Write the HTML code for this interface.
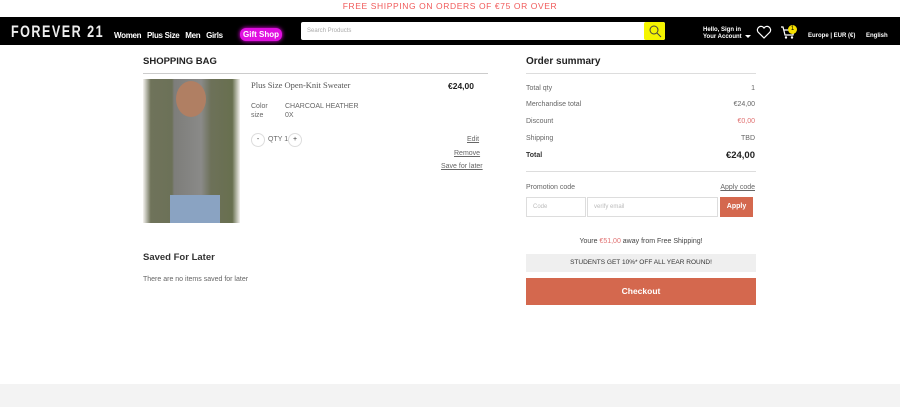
<!DOCTYPE html>
<html><head><meta charset="utf-8"><style>
*{margin:0;padding:0;box-sizing:border-box}
body{width:900px;height:407px;position:relative;background:#fff;font-family:"Liberation Sans",sans-serif;overflow:hidden;color:#333}
.a{position:absolute;white-space:nowrap}
.s{font-size:7px;color:#666}
</style></head><body>
<div class="a" style="left:0;width:900px;top:1px;text-align:center;color:#f05a5a;font-size:8.5px;letter-spacing:0.6px">FREE SHIPPING ON ORDERS OF €75 OR OVER</div>
<div class="a" style="left:0;top:17px;width:900px;height:28px;background:#000"></div>
<div class="a" style="left:11px;top:22px;color:#eee;font-size:17px;font-weight:bold;letter-spacing:2px;transform:scaleX(0.74);transform-origin:left top">FOREVER 21</div>
<div class="a" style="left:114px;top:31px;color:#fff;font-size:8px;font-weight:bold;letter-spacing:-0.3px">Women&nbsp;&nbsp;&nbsp;Plus Size&nbsp;&nbsp;&nbsp;Men&nbsp;&nbsp;&nbsp;Girls</div>
<div class="a" style="left:240px;top:28px;height:13px;padding:2px 3px;background:#e010e0;border-radius:6px;box-shadow:0 0 4px #f0f;color:#fff;font-size:8px;font-weight:bold">Gift Shop</div>
<div class="a" style="left:301px;top:22px;width:364px;height:18px;background:#fff;border-radius:2px"></div>
<div class="a" style="left:307px;top:28px;font-size:6px;color:#aaa">Search Products</div>
<div class="a" style="left:644px;top:22px;width:21px;height:18px;background:#f5f500;border-radius:2px"></div>
<svg class="a" style="left:648px;top:24px" width="14" height="14"><circle cx="6" cy="6" r="4" fill="none" stroke="#444" stroke-width="1"/><path d="M9 9L13 13" stroke="#444"/></svg>
<div class="a" style="left:703px;top:27px;color:#fff;font-size:6px;font-weight:bold;line-height:7px">Hello, Sign in<br>Your Account</div>
<div class="a" style="left:745px;top:35px;border:3px solid transparent;border-top-color:#fff"></div>
<svg class="a" style="left:756px;top:25px" width="16" height="14"><path d="M8 13L2 7A3.2 3.2 0 0 1 8 3A3.2 3.2 0 0 1 14 7Z" fill="none" stroke="#fff" stroke-width="1.2"/></svg>
<svg class="a" style="left:780px;top:25px" width="16" height="15"><path d="M1 2H3L5 10H13L14 5H4" fill="none" stroke="#fff" stroke-width="1.2"/><circle cx="6" cy="12.5" r="1.2" fill="#fff"/><circle cx="12" cy="12.5" r="1.2" fill="#fff"/></svg>
<div class="a" style="left:788px;top:25px;width:9px;height:9px;border-radius:50%;background:#f5e000;font-size:6px;text-align:center;line-height:9px;color:#000">1</div>
<div class="a" style="left:808px;top:33px;color:#fff;font-size:6px;font-weight:bold">Europe | EUR (€)</div>
<div class="a" style="left:866px;top:33px;color:#fff;font-size:6px;font-weight:bold">English</div>

<div class="a" style="left:143px;top:56px;font-size:9.5px;font-weight:bold;color:#222">SHOPPING BAG</div>
<div class="a" style="left:143px;top:73px;width:345px;height:1px;background:#ccc"></div>
<div class="a" style="left:143px;top:79px;width:97px;height:144px;background:linear-gradient(90deg,#f5f3f0 0,#6f735a 8%,#6c7158 30%,#7d7d7a 32%,#8a8a88 60%,#6d7159 70%,#68704f 92%,#f3f1ee 100%)"></div>
<div class="a" style="left:176px;top:81px;width:30px;height:36px;border-radius:50%;background:#b07f63"></div>
<div class="a" style="left:170px;top:195px;width:50px;height:28px;background:#8aa3c2"></div>
<div class="a" style="left:251px;top:80px;font-size:8.5px;color:#555;font-family:'Liberation Serif',serif">Plus Size Open-Knit Sweater</div>
<div class="a" style="left:448px;top:81px;font-size:8.5px;font-weight:bold;color:#222">€24,00</div>
<div class="a s" style="left:251px;top:103px">Color</div><div class="a s" style="left:285px;top:103px">CHARCOAL HEATHER</div>
<div class="a s" style="left:251px;top:112px">size</div><div class="a s" style="left:285px;top:112px">0X</div>
<div class="a" style="left:251px;top:133px;width:14px;height:14px;border:1px solid #ddd;border-radius:50%;font-size:7px;text-align:center;line-height:12px">-</div>
<div class="a s" style="left:268px;top:136px">QTY 1</div>
<div class="a" style="left:288px;top:133px;width:14px;height:14px;border:1px solid #ddd;border-radius:50%;font-size:7px;text-align:center;line-height:12px">+</div>
<div class="a s" style="left:467px;top:136px;text-decoration:underline">Edit</div>
<div class="a s" style="left:454px;top:150px;text-decoration:underline">Remove</div>
<div class="a s" style="left:441px;top:163px;text-decoration:underline">Save for later</div>
<div class="a" style="left:143px;top:252px;font-size:9.5px;font-weight:bold;color:#333">Saved For Later</div>
<div class="a s" style="left:143px;top:276px">There are no items saved for later</div>

<div class="a" style="left:526px;top:56px;font-size:10px;font-weight:bold;color:#222">Order summary</div>
<div class="a" style="left:526px;top:73px;width:230px;height:1px;background:#ddd"></div>
<div class="a s" style="left:526px;top:85px">Total qty</div><div class="a s" style="right:145px;top:85px">1</div>
<div class="a s" style="left:526px;top:101px">Merchandise total</div><div class="a s" style="right:145px;top:101px">€24,00</div>
<div class="a s" style="left:526px;top:118px">Discount</div><div class="a s" style="right:145px;top:118px;color:#e07070">€0,00</div>
<div class="a s" style="left:526px;top:135px">Shipping</div><div class="a s" style="right:145px;top:135px">TBD</div>
<div class="a s" style="left:526px;top:152px;font-weight:bold;color:#333">Total</div><div class="a" style="right:145px;top:150px;font-size:9.5px;font-weight:bold;color:#222">€24,00</div>
<div class="a" style="left:526px;top:171px;width:230px;height:1px;background:#ddd"></div>
<div class="a s" style="left:526px;top:184px">Promotion code</div><div class="a s" style="right:145px;top:184px;text-decoration:underline">Apply code</div>
<div class="a" style="left:526px;top:197px;width:60px;height:20px;border:1px solid #ddd"></div>
<div class="a" style="left:533px;top:204px;font-size:6px;color:#bbb">Code</div>
<div class="a" style="left:587px;top:197px;width:131px;height:20px;border:1px solid #ddd"></div>
<div class="a" style="left:594px;top:204px;font-size:6px;color:#bbb">verify email</div>
<div class="a" style="left:720px;top:197px;width:33px;height:20px;background:#d4684e;color:#fff;font-size:7px;font-weight:bold;text-align:center;line-height:20px">Apply</div>
<div class="a s" style="left:526px;width:230px;text-align:center;top:238px;color:#444">Youre <span style="color:#e07070">€51,00</span> away from Free Shipping!</div>
<div class="a" style="left:526px;top:254px;width:230px;height:18px;background:#efefef;font-size:6.5px;text-align:center;line-height:18px;color:#333">STUDENTS GET 10%* OFF ALL YEAR ROUND!</div>
<div class="a" style="left:526px;top:278px;width:230px;height:27px;background:#d4684e;color:#fff;font-size:8.5px;font-weight:bold;text-align:center;line-height:27px">Checkout</div>
<div class="a" style="left:0;top:384px;width:900px;height:23px;background:#f3f3f3"></div>
</body></html>
